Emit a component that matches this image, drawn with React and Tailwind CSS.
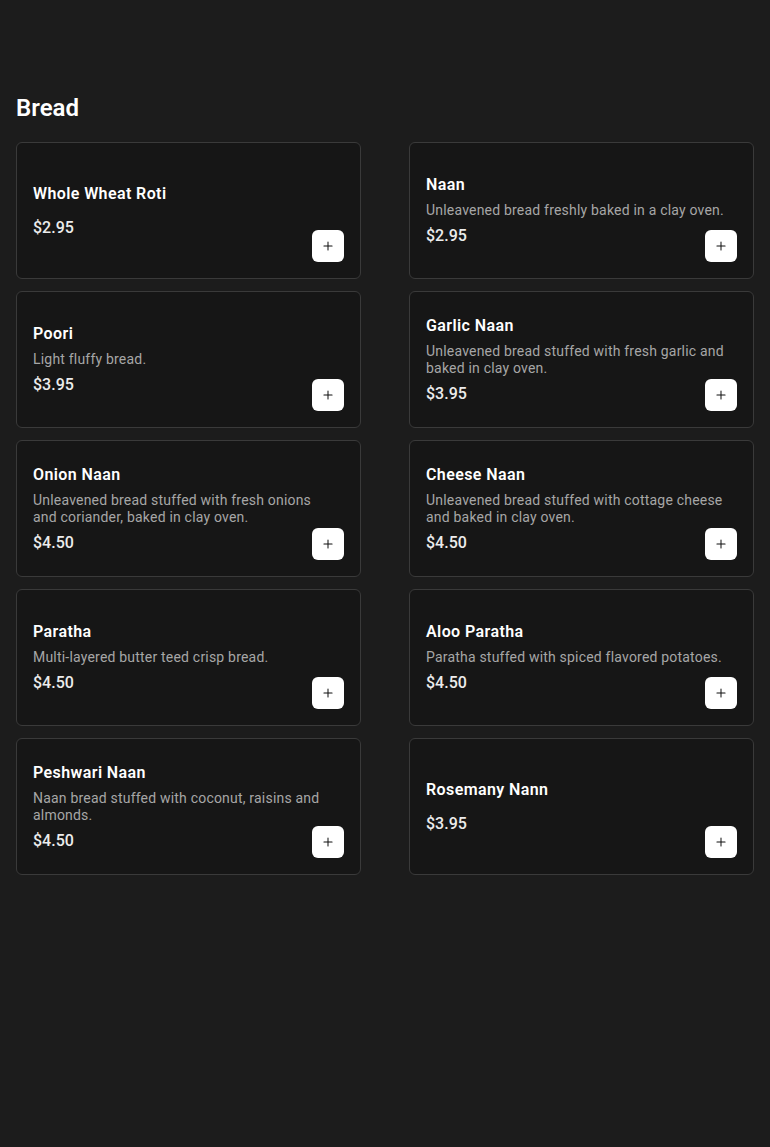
import { Plus } from "lucide-react";

const breads = [
  { name: "Whole Wheat Roti", desc: "", price: "$2.95" },
  { name: "Naan", desc: "Unleavened bread freshly baked in a clay oven.", price: "$2.95" },
  { name: "Poori", desc: "Light fluffy bread.", price: "$3.95" },
  { name: "Garlic Naan", desc: "Unleavened bread stuffed with fresh garlic and baked in clay oven.", price: "$3.95" },
  { name: "Onion Naan", desc: "Unleavened bread stuffed with fresh onions and coriander, baked in clay oven.", price: "$4.50" },
  { name: "Cheese Naan", desc: "Unleavened bread stuffed with cottage cheese and baked in clay oven.", price: "$4.50" },
  { name: "Paratha", desc: "Multi-layered butter teed crisp bread.", price: "$4.50" },
  { name: "Aloo Paratha", desc: "Paratha stuffed with spiced flavored potatoes.", price: "$4.50" },
  { name: "Peshwari Naan", desc: "Naan bread stuffed with coconut, raisins and almonds.", price: "$4.50" },
  { name: "Rosemany Nann", desc: "", price: "$3.95" },
];

const MenuCard = ({ item }) => {
  return (
    <div className="relative h-[137px] flex items-center px-4 rounded-md border border-[#3a3a3a] bg-[#161616]">
      <div className="w-[301px] flex flex-col gap-[5px]">
        <h3 className="text-base leading-6 font-semibold tracking-wide text-white">{item.name}</h3>
        <p className="text-sm leading-[17px] tracking-[0.2px] text-[#a6a6a6]">{item.desc}</p>
        <span className="text-base leading-6 font-medium text-[#ececec]">{item.price}</span>
      </div>
      <button className="absolute right-4 bottom-4 w-8 h-8 flex items-center justify-center rounded-md bg-white text-[#111]">
        <Plus size={14} strokeWidth={1.75} />
      </button>
    </div>
  );
};

export default function App() {
  return (
    <div className="min-h-screen w-full bg-[#1c1c1c] px-4 pt-[92px] pb-10 font-['Roboto',sans-serif]">
      <h2 className="text-2xl leading-8 font-semibold text-white mb-[18px]">Bread</h2>
      <div className="grid grid-cols-2 gap-x-12 gap-y-3">
        {breads.map((item) => (
          <MenuCard key={item.name} item={item} />
        ))}
      </div>
    </div>
  );
}
